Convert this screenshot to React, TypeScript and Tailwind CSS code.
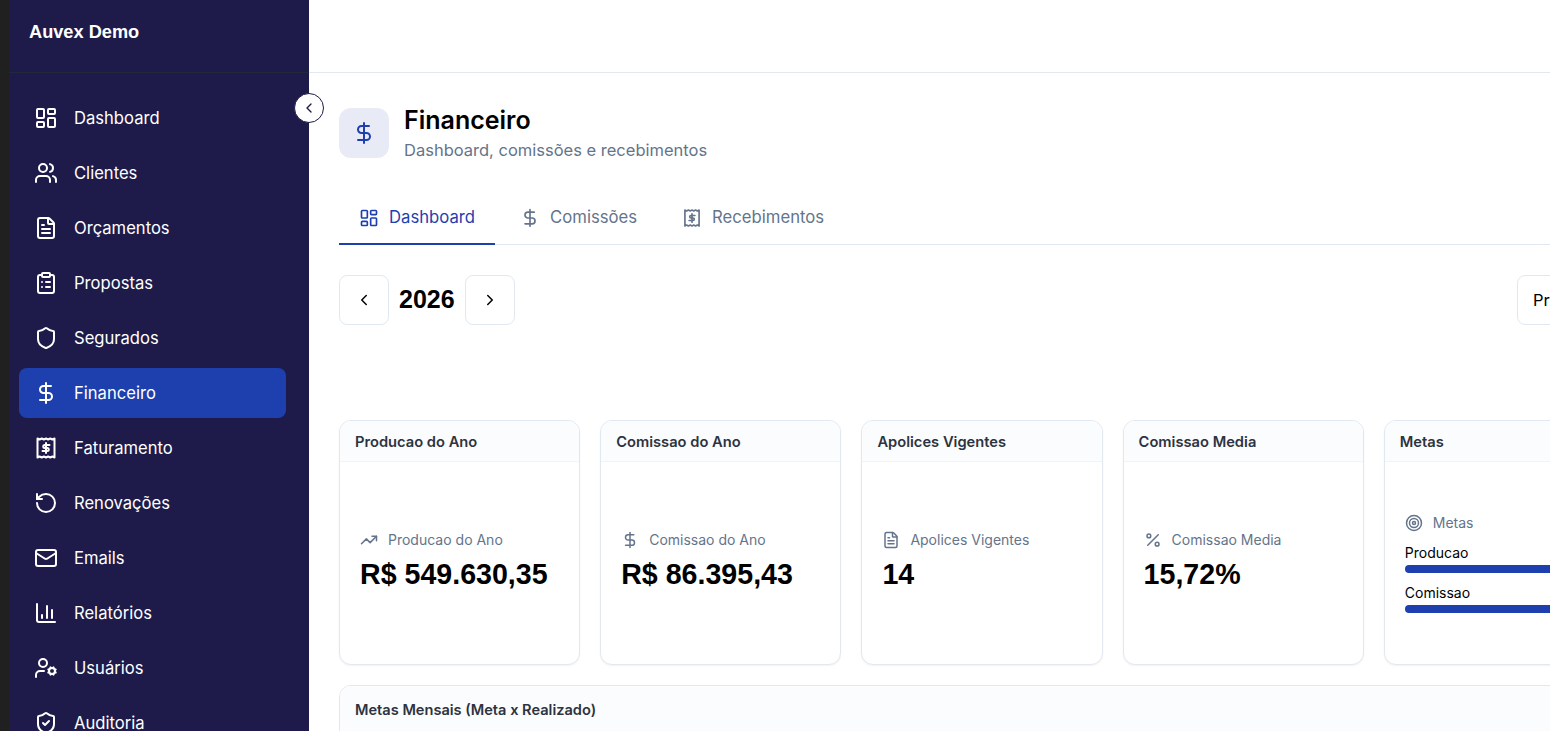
import {
  ChartColumn,
  ChevronLeft,
  ChevronRight,
  ClipboardList,
  DollarSign,
  FileText,
  LayoutDashboard,
  Mail,
  Percent,
  RotateCcw,
  Shield,
  ShieldCheck,
  Target,
  TrendingUp,
  UserCog,
  Users,
} from 'lucide-react';

function ReceiptDollar({ className }: { className?: string }) {
  return (
    <svg viewBox="0 0 24 24" fill="none" stroke="currentColor" strokeWidth="2" strokeLinecap="round" strokeLinejoin="round" className={className}>
      <path d="M3.5 2.5l2.125 1 2.125-1 2.125 1 2.125-1 2.125 1 2.125-1 2.125 1 2.125-1v19l-2.125-1-2.125 1-2.125-1-2.125 1-2.125-1-2.125 1-2.125-1-2.125 1z" />
      <path d="M12 7v10" />
      <path d="M15.5 9h-4.75a1.5 1.5 0 0 0 0 3h2.5a1.5 1.5 0 0 1 0 3H8.5" />
    </svg>
  );
}

const navItems = [
  { label: 'Dashboard', icon: LayoutDashboard },
  { label: 'Clientes', icon: Users },
  { label: 'Orçamentos', icon: FileText },
  { label: 'Propostas', icon: ClipboardList },
  { label: 'Segurados', icon: Shield },
  { label: 'Financeiro', icon: DollarSign, active: true },
  { label: 'Faturamento', icon: ReceiptDollar },
  { label: 'Renovações', icon: RotateCcw },
  { label: 'Emails', icon: Mail },
  { label: 'Relatórios', icon: ChartColumn },
  { label: 'Usuários', icon: UserCog },
  { label: 'Auditoria', icon: ShieldCheck },
];

const tabs = [
  { label: 'Dashboard', icon: LayoutDashboard, active: true },
  { label: 'Comissões', icon: DollarSign },
  { label: 'Recebimentos', icon: ReceiptDollar },
];

const stats = [
  { title: 'Producao do Ano', value: 'R$ 549.630,35', icon: TrendingUp },
  { title: 'Comissao do Ano', value: 'R$ 86.395,43', icon: DollarSign },
  { title: 'Apolices Vigentes', value: '14', icon: FileText },
  { title: 'Comissao Media', value: '15,72%', icon: Percent },
];

function Card({ title, children }: { title: string; children?: React.ReactNode }) {
  return (
    <div className="flex h-[245px] flex-col overflow-hidden rounded-xl border border-[#e2e8f0] bg-white shadow-[0_1px_2px_rgba(0,0,0,0.05)]">
      <div className="flex h-[41px] shrink-0 items-center border-b border-[#f1f5f9] bg-[#fbfcfe] px-[15px] pt-[2px] text-[14.7px] font-semibold text-[#2d3340]">
        {title}
      </div>
      <div className="flex flex-1 flex-col justify-center p-5">{children}</div>
    </div>
  );
}

export default function App() {
  return (
    <div className="relative flex h-[731px] w-[1550px] overflow-hidden bg-white font-['Inter',sans-serif] text-black">
      <div className="w-[9px] shrink-0 bg-[#202020]" />

      <aside className="w-[300px] shrink-0 overflow-hidden bg-[#1e1b4b] text-white">
        <div className="flex h-[73px] items-center border-b border-[#1e293b] px-5 pb-[6px] font-['Liberation_Sans',sans-serif] text-[18.2px] font-bold">
          Auvex Demo
        </div>
        <nav className="flex flex-col gap-[5px] pt-5 pl-2.5 pr-[23px]">
          {navItems.map(item => (
            <div
              key={item.label}
              className={`flex h-[50px] shrink-0 items-center gap-4 rounded-lg px-[15px] text-[16.6px] ${item.active ? 'bg-[#1e40af]' : ''}`}
            >
              <item.icon className="h-6 w-6 shrink-0" />
              <span>{item.label}</span>
            </div>
          ))}
        </nav>
      </aside>

      <button className="absolute top-[93px] left-[294px] z-10 flex h-[30px] w-[30px] items-center justify-center rounded-full border border-[#1e1b4b] bg-white text-[#1e1b4b]">
        <ChevronLeft className="h-4 w-4" />
      </button>

      <main className="w-[1346px] shrink-0">
        <div className="h-[73px] border-b border-[#e2e8f0]" />
        <div className="px-[30px] pt-[35px]">
          <div className="flex h-[50px] items-center gap-[15px]">
            <div className="flex h-[50px] w-[50px] items-center justify-center rounded-xl bg-[#e8eaf6] text-[#1e40af]">
              <DollarSign className="h-6 w-6" />
            </div>
            <div className="flex h-[50px] flex-col justify-center pt-[2px]">
              <h1 className="text-[25px] leading-[30px] font-semibold">Financeiro</h1>
              <p className="mt-[2px] text-[16.5px] leading-[26px] text-[#64748b]">Dashboard, comissões e recebimentos</p>
            </div>
          </div>

          <div className="mt-[36px] flex h-[51px] gap-[5px] border-b border-[#e2e8f0]">
            {tabs.map(tab => (
              <div
                key={tab.label}
                className={`-mb-px flex items-center gap-2.5 border-b-2 px-5 pb-[1px] text-[16.7px] ${tab.active ? 'border-[#1e40af] text-[#1e40af]' : 'border-transparent text-[#64748b]'}`}
              >
                <tab.icon className="h-5 w-5" />
                <span>{tab.label}</span>
              </div>
            ))}
          </div>

          <div className="mt-[30px] mb-[95px] flex items-center justify-between">
            <div className="flex items-center gap-2.5">
              <button className="flex h-[50px] w-[50px] items-center justify-center rounded-lg border border-[#e2e8f0] bg-white">
                <ChevronLeft className="h-[18px] w-[18px]" />
              </button>
              <span className="font-['Liberation_Sans',sans-serif] text-[25px] font-bold">2026</span>
              <button className="flex h-[50px] w-[50px] items-center justify-center rounded-lg border border-[#e2e8f0] bg-white">
                <ChevronRight className="h-[18px] w-[18px]" />
              </button>
            </div>
            <div className="flex h-[50px] w-[108px] items-center rounded-lg border border-[#e2e8f0] bg-white px-[15px] text-[16.5px]">
              Producao
            </div>
          </div>

          <div className="grid grid-cols-5 gap-5">
            {stats.map(stat => (
              <Card key={stat.title} title={stat.title}>
                <div className="mb-[4px]">
                  <div className="flex items-center gap-2.5 text-sm text-[#64748b]">
                    <stat.icon className="h-[18px] w-[18px] shrink-0" />
                    <span>{stat.title}</span>
                  </div>
                  <div className="mt-[6px] font-['Liberation_Sans',sans-serif] text-[28.6px] leading-9 font-bold">{stat.value}</div>
                </div>
              </Card>
            ))}
            <Card title="Metas">
              <div className="flex items-center gap-2.5 text-sm text-[#64748b]">
                <Target className="h-[18px] w-[18px] shrink-0" />
                <span>Metas</span>
              </div>
              <div className="mt-[10px] mb-[2px] text-sm leading-[20px]">Producao</div>
              <div className="h-2 rounded-full bg-[#1e40af]" />
              <div className="mt-[10px] mb-[2px] text-sm leading-[20px]">Comissao</div>
              <div className="h-2 rounded-full bg-[#1e40af]" />
            </Card>
          </div>

          <div className="mt-5 h-[200px] overflow-hidden rounded-xl border border-[#e2e8f0] bg-white">
            <div className="flex h-[50px] items-center border-b border-[#f1f5f9] bg-[#fbfcfe] px-[15px] text-[14.6px] font-semibold text-[#2d3340]">
              Metas Mensais (Meta x Realizado)
            </div>
          </div>
        </div>
      </main>
    </div>
  );
}
